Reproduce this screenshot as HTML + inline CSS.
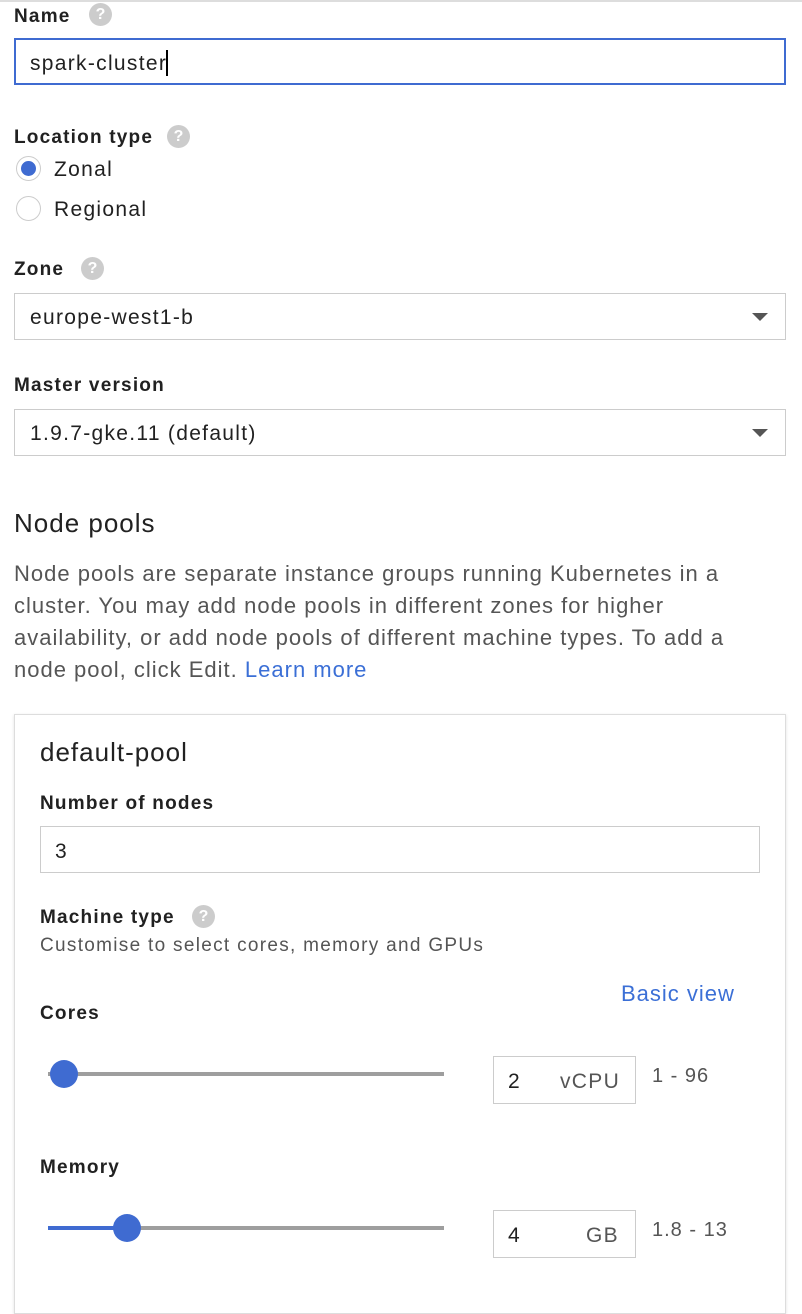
<!DOCTYPE html>
<html><head><meta charset="utf-8"><style>
*{margin:0;padding:0;box-sizing:border-box}
body{width:802px;height:1276px;overflow:hidden;background:#fff;font-family:"Liberation Sans",Arial,sans-serif;color:#000;position:relative}
.a{position:absolute;white-space:nowrap;line-height:30px;height:30px;margin-top:2px}
.lab{font-weight:bold;font-size:19px;color:#212121;letter-spacing:1.2px}
.help{position:absolute;width:23px;height:23px;border-radius:50%;background:#ccc;color:#fff;font-weight:bold;font-size:16px;text-align:center;line-height:23px}
.box{position:absolute;border:1px solid #ccc;background:#fff}
.t{font-size:21px;color:#212121;letter-spacing:1.3px}
.p{font-size:22px;color:#555;letter-spacing:1px}
.arrow{position:absolute;width:0;height:0;border-left:8px solid transparent;border-right:8px solid transparent;border-top:8px solid #555}
.radio{position:absolute;width:25px;height:25px;border-radius:50%;border:1.5px solid #ccc;background:#fff}
.track{position:absolute;height:4px;background:#9e9e9e}
.knob{position:absolute;width:28px;height:28px;border-radius:50%;background:#3f6bd1}
</style></head><body>
<div style="position:absolute;left:0;top:0;width:802px;height:2px;background:#ddd"></div>
<div class="a lab" style="left:14px;top:0">Name</div>
<div class="help" style="left:89px;top:3px">?</div>
<div class="box" style="left:14px;top:38px;width:772px;height:47px;border:2px solid #3f6bd1"></div>
<div class="a t" style="left:30px;top:47px">spark-cluste<span style="letter-spacing:0">r</span><span style="display:inline-block;width:2px;height:26px;background:#000;vertical-align:-6px"></span></div>

<div class="a lab" style="left:14px;top:121px">Location type</div>
<div class="help" style="left:167px;top:125px">?</div>
<div class="radio" style="left:16px;top:156px"></div>
<div style="position:absolute;left:21px;top:161px;width:15px;height:15px;border-radius:50%;background:#3f6bd1"></div>
<div class="a t" style="left:54px;top:153px">Zonal</div>
<div class="radio" style="left:16px;top:196px"></div>
<div class="a t" style="left:54px;top:193px">Regional</div>

<div class="a lab" style="left:14px;top:253px">Zone</div>
<div class="help" style="left:81px;top:257px">?</div>
<div class="box" style="left:14px;top:293px;width:772px;height:47px"></div>
<div class="a t" style="left:30px;top:301px">europe-west1-b</div>
<div class="arrow" style="left:752px;top:313px"></div>

<div class="a lab" style="left:14px;top:369px">Master version</div>
<div class="box" style="left:14px;top:409px;width:772px;height:47px"></div>
<div class="a t" style="left:30px;top:417px">1.9.7-gke.11 (default)</div>
<div class="arrow" style="left:752px;top:429px"></div>

<div class="a" style="left:14px;top:506px;font-size:26px;color:#212121;letter-spacing:1px">Node pools</div>
<div class="a p" style="left:14px;top:557px">Node pools are separate instance groups running Kubernetes in a</div>
<div class="a p" style="left:14px;top:589px">cluster. You may add node pools in different zones for higher</div>
<div class="a p" style="left:14px;top:621px">availability, or add node pools of different machine types. To add a</div>
<div class="a p" style="left:14px;top:653px">node pool, click Edit. <span style="color:#3b6fd6">Learn more</span></div>

<div style="position:absolute;left:14px;top:714px;width:772px;height:600px;border:1px solid #ddd;box-shadow:0 1px 3px rgba(0,0,0,.12)"></div>
<div class="a" style="left:40px;top:735px;font-size:26px;color:#212121;letter-spacing:1px">default-pool</div>
<div class="a lab" style="left:40px;top:787px">Number of nodes</div>
<div class="box" style="left:40px;top:826px;width:720px;height:47px"></div>
<div class="a t" style="left:55px;top:835px">3</div>
<div class="a lab" style="left:40px;top:901px">Machine type</div>
<div class="help" style="left:192px;top:905px">?</div>
<div class="a" style="left:40px;top:929px;font-size:19px;color:#555;letter-spacing:1.3px">Customise to select cores, memory and GPUs</div>
<div class="a" style="left:621px;top:977px;font-size:22px;color:#3b6fd6;letter-spacing:1px">Basic view</div>
<div class="a lab" style="left:40px;top:997px">Cores</div>
<div class="track" style="left:48px;top:1072px;width:396px"></div>
<div class="knob" style="left:50px;top:1060px"></div>
<div class="box" style="left:493px;top:1056px;width:143px;height:48px;border:1.5px solid #ccc"></div>
<div class="a t" style="left:508px;top:1065px">2</div>
<div class="a t" style="left:560px;top:1065px;color:#555">vCPU</div>
<div class="a" style="left:652px;top:1059px;font-size:20px;color:#555;letter-spacing:1px">1 - 96</div>
<div class="a lab" style="left:40px;top:1151px">Memory</div>
<div class="track" style="left:48px;top:1226px;width:396px"></div>
<div class="track" style="left:48px;top:1226px;width:80px;background:#3f6bd1"></div>
<div class="knob" style="left:113px;top:1214px"></div>
<div class="box" style="left:493px;top:1210px;width:143px;height:48px;border:1.5px solid #ccc"></div>
<div class="a t" style="left:508px;top:1219px">4</div>
<div class="a t" style="left:586px;top:1219px;color:#555">GB</div>
<div class="a" style="left:652px;top:1213px;font-size:20px;color:#555;letter-spacing:1px">1.8 - 13</div>
</body></html>
